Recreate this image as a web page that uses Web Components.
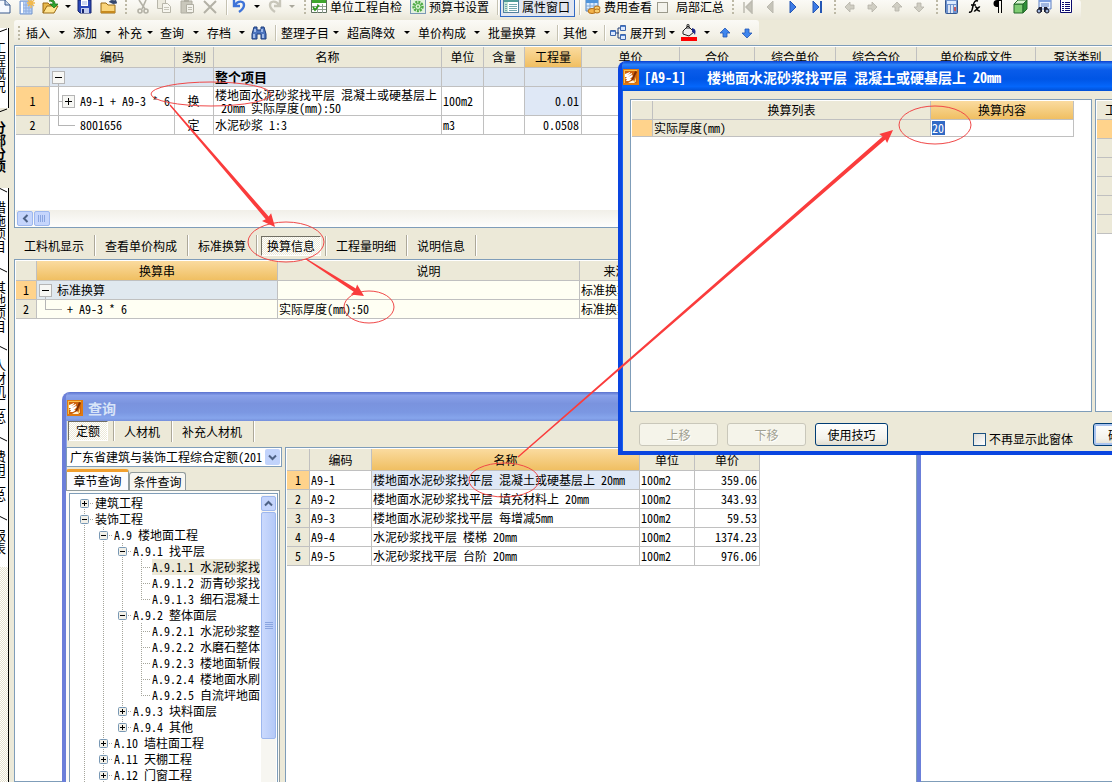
<!DOCTYPE html>
<html lang="zh-CN">
<head>
<meta charset="utf-8">
<title>分部分项</title>
<style>
html,body{margin:0;height:100%;overflow:hidden;background:#ece9d8}
body{font:12px/16px "Noto Sans CJK SC",sans-serif;font-feature-settings:"hwid";color:#000}
</style>
</head>
<body>
<budget-app></budget-app>
<script>
const BASE = `*{box-sizing:border-box}button,input,select{font:inherit;font-feature-settings:inherit;color:inherit;margin:0;padding:0;border:0;background:none;border-radius:0}svg{display:block;flex:none}`;
function define(name, render) {
  customElements.define(name, class extends HTMLElement {
    constructor() { super(); this.attachShadow({mode: 'open'}); }
    connectedCallback() {
      const t = document.createElement('template');
      t.innerHTML = render(this);
      this.shadowRoot.replaceChildren(t.content.cloneNode(true));
    }
  });
}
const svg = (w, h, body, extra = '') => `<svg width="${w}" height="${h}" viewBox="0 0 ${w} ${h}" ${extra}>${body}</svg>`;
const arrow = (c, s, r) => svg(12, 12, `<path transform="rotate(${r} 6 6)" d="M6 1l5 5H8v4H4V6H1z" fill="${c}" stroke="${s}" stroke-width=".8"/>`);
const ICONS = {
  doc: svg(12, 16, '<path d="M-3 1h8l5 5v8H-3z" fill="#f6f9ff" stroke="#39588c"/><path d="M5 1v5h5" fill="#c5d3ea" stroke="#39588c"/>'),
  sheet: svg(16, 16, '<path d="M1 2h12v13H1z" fill="#bcd3f7" stroke="#6f92cb"/><path d="M1 6h12M1 9h12M1 12h12M4 2v13M7 2v13M10 2v13" stroke="#8fadde"/><path d="M2 3h2v11H2z" fill="#fff"/><path d="M12 0v9M8 4h8M9 1l6 6M15 1L9 7" stroke="#f2b84b" stroke-width="1.3"/>'),
  open: svg(17, 16, '<path d="M1 14V4h5l2 2h5v3" fill="#e9b94b" stroke="#9a6b14"/><path d="M1 14l4-7h11l-4 7z" fill="#ffe491" stroke="#9a6b14"/><path d="M7 2c3-2 6-1 6 3h3l-4 4-4-4h3c0-2-1-3-4-3z" fill="#2fa52f" stroke="#146c14" stroke-width=".7"/>'),
  save: svg(15, 16, '<path d="M1 1h13v13H3l-2-2z" fill="#2b48b8" stroke="#16256e"/><path d="M4 1h7v6H4z" fill="#fff"/><path d="M5 3h5M5 5h5" stroke="#9db0e0"/><path d="M4 9h8v5H4z" fill="#c3cdef"/><path d="M5 10h2v4H5z" fill="#16256e"/>'),
  folderup: svg(17, 16, '<path d="M1 14V4h5l2 2h7v8z" fill="#fbd57b" stroke="#9a6b14"/><path d="M1 13h14" stroke="#c68a20" stroke-width="2"/><path d="M9 3c2-2 4-2 6-1V0l2 4-4 1" fill="#33476e" stroke="#33476e" stroke-width=".6"/>'),
  cut: svg(14, 16, '<path d="M3 1l6 9M10 1L6 10" stroke="#b3b1a6" stroke-width="1.6"/><circle cx="4" cy="12" r="2" fill="none" stroke="#b3b1a6" stroke-width="1.6"/><circle cx="10" cy="12" r="2" fill="none" stroke="#b3b1a6" stroke-width="1.6"/>'),
  copy: svg(16, 16, '<path d="M1.500.500h8v9h-8z" fill="#eceade" stroke="#b8b6aa"/><path d="M6.500 4.500h5l3 3v6h-8z" fill="#f7f6ef" stroke="#b8b6aa"/><path d="M8 8.500h5M8 10.500h5" stroke="#c9c7bb"/>'),
  paste: svg(15, 16, '<path d="M1 2h11v12H1z" fill="#c9c7bb" stroke="#b0aea2"/><path d="M6.500 5.500h7v8h-7z" fill="#f4f3ec" stroke="#b0aea2"/><path d="M8 8.500h4M8 10.500h4" stroke="#c0beb2"/><path d="M4 0h5v3H4z" fill="#b0aea2"/>'),
  del: svg(14, 16, '<path d="M1 2l12 12M13 2L1 14" stroke="#b3b1a6" stroke-width="2"/>'),
  undo: svg(14, 16, '<path d="M2 1v6h6M3 6c3-5 9-4 9 0 0 3-2 5-5 7" fill="none" stroke="#3f74d8" stroke-width="2.4"/>'),
  redo: svg(14, 16, '<path d="M12 1v6H6M11 6C8 1 2 2 2 6c0 3 2 5 5 7" fill="none" stroke="#c8c6ba" stroke-width="2.4"/>'),
  check: svg(16, 16, '<path d="M.5.500h15v13H.5z" fill="#fff" stroke="#5e6f5e"/><path d="M1 0h14v4H1z" fill="#3fa62e"/><path d="M1 7.500h14M1 10.500h14M6.500 5v9M11.500 5v9" stroke="#8f9f8f"/><path d="M2 8l2 3 4-5" fill="none" stroke="#2c9b1d" stroke-width="1.8"/>'),
  gear: svg(16, 16, '<rect x=".5" y=".5" width="15" height="14" fill="#e3f2df" stroke="#7b98b5"/><circle cx="8" cy="7.500" r="4.500" fill="none" stroke="#4eaa45" stroke-width="2.400" stroke-dasharray="2 1"/><circle cx="8" cy="7.500" r="3" fill="#d6f2d0" stroke="#4eaa45"/><circle cx="8" cy="7.500" r="1" fill="#4eaa45"/>'),
  props: svg(16, 16, '<rect x=".5" y=".5" width="15" height="13" fill="#fff" stroke="#53809e"/><path d="M1 1h14v2H1z" fill="#4f9b96"/><path d="M1 3h4v10H1z" fill="#c8e8d6"/><path d="M2 5.500h2M2 7.500h2M2 9.500h2M2 11.500h2M6 5.500h8M6 7.500h8M6 9.500h8M6 11.500h8" stroke="#75a8b0"/>'),
  cost: svg(16, 16, '<path d="M1 1h12v11H1z" fill="#d9ebff" stroke="#4f80bd"/><path d="M1 1h12v3H1z" fill="#4f94db"/><path d="M1 7h12M1 10h12M5 4v8M9 4v8" stroke="#7ca7d9"/><ellipse cx="7" cy="12" rx="4" ry="2.5" fill="#f4b34a" stroke="#b36d15"/><ellipse cx="12" cy="9" rx="3" ry="2" fill="#f9cf71" stroke="#b36d15"/><ellipse cx="12" cy="12" rx="3" ry="2" fill="#f9cf71" stroke="#b36d15"/>'),
  first: svg(12, 14, '<path d="M2 2v11M10 1v12L4 7z" fill="#c6c4b9" stroke="#bcbab0" stroke-width="1.5"/>'),
  prev: svg(12, 14, '<path d="M8 1v12L2 7z" fill="#c6c4b9" stroke="#bcbab0"/>'),
  next: svg(12, 14, '<path d="M2 1v12l6-6z" fill="#3d7be6" stroke="#2456b4"/>'),
  last: svg(12, 14, '<path d="M2 1v12l6-6z" fill="#3d7be6" stroke="#2456b4"/><path d="M10 1v12" stroke="#2456b4" stroke-width="2"/>'),
  gl: arrow('#d0cec3', '#b5b3a8', -90), gr: arrow('#d0cec3', '#b5b3a8', 90), gu: arrow('#d0cec3', '#b5b3a8', 0), gd: arrow('#d0cec3', '#b5b3a8', 180),
  up: arrow('#3f86ee', '#2456b4', 0), down: arrow('#3f86ee', '#2456b4', 180),
  calc: svg(13, 16, '<rect x=".5" y=".5" width="12" height="14" rx="1" fill="#6f93cf" stroke="#34568f"/><path d="M2 2h9v3H2z" fill="#dcebff"/><path d="M3 7h2M6 7h2M9 7h2M3 9h2M6 9h2M3 11h2M6 11h2M3 13h2M6 13h2" stroke="#fff" stroke-width="1.4"/><path d="M9 9h2M9 11h2" stroke="#e04a3a" stroke-width="1.4"/>'),
  fx: svg(14, 16, '<path d="M1 13c3 1 3-2 4-6s2-6 5-5M3 6h5M7 8c3-1 1 5 5 4M12 8c-2-1-4 5-6 4" fill="none" stroke="#000" stroke-width="1.5"/>'),
  para: svg(12, 16, '<path d="M10 1H5a3 3 0 0 0 0 7h1v6h1V2h2v12h1V2z"/>'),
  cube: svg(15, 16, '<path d="M1 5h9v9H1z" fill="#7fcc73" stroke="#25692a"/><path d="M1 5l4-4h9l-4 4z" fill="#d9f4d1" stroke="#25692a"/><path d="M10 5l4-4v9l-4 4z" fill="#2f8f37" stroke="#25692a"/>'),
  find: svg(16, 16, '<path d="M3 0h12v10H3z" fill="#e8f0ff" stroke="#5c7ec2"/><path d="M3 0h12v3H3z" fill="#7fa0e0"/><path d="M5 5h8M5 7h8" stroke="#5c7ec2"/><path d="M1 13l2-5h3v5zM8 13V8h3l2 5z" fill="#223"/><circle cx="3" cy="12" r="2" fill="#9fb6de" stroke="#112"/><circle cx="11" cy="12" r="2" fill="#9fb6de" stroke="#112"/>'),
  list: svg(14, 16, '<path d="M1.500.500h11v13h-11z" fill="#fff" stroke="#0a0a6e"/><path d="M3 3.500h2M6 3.500h5M3 5.500h2M6 5.500h5M3 7.500h2M6 7.500h5M3 9.500h2M6 9.500h5M3 11.500h2M6 11.500h5" stroke="#0a0a6e"/>'),
  bino: svg(16, 14, '<path d="M3 1h3v3h4V1h3l2 7v5h-5V8H6v5H1V8z" fill="#4c74bd" stroke="#1d3c7c"/><path d="M3 8v4M12 8v4M4 3v3M11 3v3" stroke="#cfe0ff" stroke-width="1.3"/>'),
  tree: svg(17, 16, '<path d="M5 8h4M8 3v10M8 3h3M8 13h3" fill="none" stroke="#223f74"/><path d="M.5 5.500h5v5h-5zM10.500.500h5v5h-5zM10.500 9.500h5v5h-5z" fill="#dce9ff" stroke="#3e66aa"/><path d="M1 6h4v1H1zM11 1h4v1h-4zM11 10h4v1h-4z" fill="#4d7fd0"/>'),
  paint: svg(16, 17, '<path d="M2 7l5-5 6 6-5 4-6-2z" fill="#eee" stroke="#222"/><path d="M6 5V1c0-1 2-1 2 0v4" fill="none" stroke="#222"/><path d="M11 4c4 1 4 3 3 7-1-2-2-3-3-3z" fill="#1d2b8a"/><path d="M0 13h16v4H0z" fill="#f00"/>'),
  app: svg(16, 16, '<path d="M0 0h16v16H0z" fill="#e07a10"/><path d="M1 1h13v13H1z" fill="#f9c04a"/><path d="M2 2h12v12H2z" fill="#d0640e"/><path d="M2 5l5-2v1L4 6l5-2v1L5 8l4-2 1 1-3 3h2l-3 2H3l1-2H2l2-2H2z" fill="#fff"/><path d="M5 14l5-3 2 3z" fill="#fff3d8"/><path d="M12 2l2 1-4 8-2 1z" fill="#7d2e04"/><path d="M13 8v5h-2z" fill="#ffd873"/>'),
  grip: svg(4, 14, '<path d="M1 0v2M1 4v2M1 8v2M1 12v2" stroke="#bdb9a6" stroke-width="2"/>'),
  sep: svg(2, 16, '<path d="M.5 0v16" stroke="#c5c2b2"/><path d="M1.500 0v16" stroke="#fff"/>'),
  caret: svg(6, 4, '<path d="M0 0h6L3 3z"/>'),
  caretoff: svg(6, 4, '<path d="M0 0h6L3 3z" fill="#aaa89c"/>')
};
const box = (x, y, plus) => `<rect x="${x}.5" y="${y}.5" width="12" height="12" fill="#f7f7f4" stroke="#b5b5b5"/><path d="M${x + 3} ${y + 6}.5h7${plus ? `M${x + 6}.5 ${y + 3}v7` : ''}" stroke="#000"/>`;

/* tool-item: icon, caret, or a labelled command in a bar */
define('tool-item', el => {
  const k = el.getAttribute('icon'), pas = /^(grip|sep)$/.test(k), label = el.textContent;
  const on = el.hasAttribute('active'), chk = k === 'box';
  const inner = `${chk ? '<input type="checkbox" id="c">' : k ? ICONS[k] : ''}${label ? '<slot></slot>' : ''}`;
  return `<style>${BASE}:host{display:flex;flex:none;align-items:center;width:${el.getAttribute('w')}px;white-space:nowrap}
  .b{display:flex;align-items:center;gap:3px;height:20px;line-height:16px}
  .on{border:1px solid #316ac5;background:#e1e6f0;padding:0 2px;width:75px}
  label.b{gap:8px}input{appearance:none;width:11px;height:11px;border:1px solid #9c9a8c;background:#f4f3ec}</style>
  ${pas ? inner : chk ? `<label class="b">${inner}</label>` : `<button class="b ${on ? 'on' : ''}" aria-label="${label || k}">${inner}</button>`}`;
});
define('tool-bar', () => `<style>${BASE}:host{display:flex;align-items:center;width:max-content;border-radius:3px;background:linear-gradient(#fbfaf6,#f3f1e7 60%,#e9e6d7)}</style><slot></slot>`);
const items = list => list.map(([icon, w, t = '', a = '']) => `<tool-item ${icon ? `icon="${icon}"` : ''} w="${w}" ${a}>${t}</tool-item>`).join('');

const BAR1 = items([['doc',19],['sheet',23],['open',23],['caret',12],['save',23],['folderup',25],['grip',11],['cut',20],['copy',24],['paste',23],['del',23],['sep',6],['undo',22],['caret',14],['redo',21],['caretoff',15],['grip',7],
  ['check',99,'单位工程自检'],['gear',87,'预算书设置'],['sep',3],['props',79,'属性窗口','active'],['sep',6],['cost',72,'费用查看'],['box',75,'局部汇总'],['grip',10],['first',23],['prev',23],['next',23],['last',23],['grip',10],['gl',22],['gr',25],['gu',22],['gd',23],['grip',9],['calc',23],['fx',24],['para',21],['cube',23],['find',23],['list',22]]);
const BAR2 = items([['grip',8],['',33,'插入'],['caret',14],['',32,'添加'],['caret',13],['',29,'补充'],['caret',13],['',33,'查询'],['caret',14],['',32,'存档'],['caret',12],['bino',24],['sep',6],['',52,'整理子目'],['caret',14],['',57,'超高降效'],['caret',14],['',56,'单价构成'],['caret',14],['',56,'批量换算'],['caret',13],['sep',6],['',29,'其他'],['caret',12],['sep',6],['tree',59,'展开到'],['caret',12],['paint',23],['caret',15],['up',22],['down',18]]);

/* data-grid: column widths, header labels and rows come from a named model */
const c = (t, k = '') => ({t, k});
const row5 = (n, a, b, p) => ({h: 19, d: [c(n, 'n' + (n === '1' ? ' cur' : '')), c(a), c(b, n === '1' ? 'sel' : ''), c('100m2'), c(p, 'r')]});
const MODELS = {
  main: {w: [34,125,39,228,42,41,57,98,75,81,81,119,84], hh: 21, hot: 6, head: ['','编码','类别','名称','单位','含量','工程量','单价','合价','综合单价','综合合价','单价构成文件','泵送类别'], rows: [
    {h: 19, k: 'grp', d: [c('', 'n'), c(svg(30, 18, box(2, 3, 0) + '<path d="M8.500 16v3" stroke="#b5b5b5"/>', 'overflow="visible"'), 't'), c(''), c('<b>整个项目</b>'), ...Array(9).fill(c(''))]},
    {h: 29, d: [c('1', 'n cur'), c(svg(30, 28, '<path d="M8.500-1v30M8 14.500h5" stroke="#b5b5b5"/>' + box(12, 8, 1), 'overflow="visible"') + 'A9-1 + A9-3 * 6', 't'), c('换', 'm'), c('楼地面水泥砂浆找平层 混凝土或硬基层上<br>&nbsp;20mm 实际厚度(mm):50', 'two'), c('100m2'), c(''), c('0.01', 'r sel'), ...Array(6).fill(c(''))]},
    {h: 19, d: [c('2', 'n'), c(svg(30, 18, '<path d="M8.500-1v11M8 9.500h17" fill="none" stroke="#b5b5b5"/>', 'overflow="visible"') + '8001656', 't'), c('定', 'm'), c('水泥砂浆 1:3'), c('m3'), c(''), c('0.0508', 'r'), ...Array(6).fill(c(''))]}]},
  conv: {w: [21,241,302,72], hh: 20, hot: 1, head: ['','换算串','说明','来源'], rows: [
    {h: 19, k: 'cream', d: [c('1', 'n cur'), c(svg(20, 18, box(2, 3, 0) + '<path d="M8.500 16v3" stroke="#b5b5b5"/>', 'overflow="visible"') + '标准换算', 't blue'), c(''), c('标准换算')]},
    {h: 19, k: 'cream', d: [c('2', 'n'), c(svg(30, 18, '<path d="M8.500-1v11M8 9.500h17" stroke="#b5b5b5"/>', 'overflow="visible"') + '+ A9-3 * 6', 't'), c('实际厚度(mm):50'), c('标准换算')]}]},
  quota: {w: [23,62,268,55,65], hh: 22, hot: 2, head: ['','编码','名称','单位','单价'], rows: [
    row5('1','A9-1','楼地面水泥砂浆找平层 混凝土或硬基层上 20mm','359.06'), row5('2','A9-2','楼地面水泥砂浆找平层 填充材料上 20mm','343.93'), row5('3','A9-3','楼地面水泥砂浆找平层 每增减5mm','59.53'), row5('4','A9-4','水泥砂浆找平层 楼梯 20mm','1374.23'), row5('5','A9-5','水泥砂浆找平层 台阶 20mm','976.06')]},
  factor: {w: [21,278,143], hh: 19, hot: 2, head: ['','换算列表','换算内容'], rows: [{h: 17, d: [c('', 'cur'), c('实际厚度(mm)', 'dim'), c('<input value="20" aria-label="换算内容">')]}]},
  work: {w: [80], hh: 19, hot: -1, head: ['工'], rows: [{h: 19, d: [c('', 'cur')]}, ...Array(5).fill({h: 19, d: [c('', 'dim')]})]}
};
define('data-grid', el => {
  const m = MODELS[el.getAttribute('model')];
  return `<style>${BASE}:host{display:block;overflow:hidden}
  table{table-layout:fixed;border-collapse:separate;border-spacing:0;width:${m.w.reduce((a, b) => a + b)}px;background:#fff}
  th,td{border:solid #c0c0c0;border-width:0 1px 1px 0;padding:0 2px 0 1px;font-weight:400;line-height:16px;text-align:left;white-space:nowrap;overflow:hidden}
  th{background:#ece9d8;text-align:center;padding:0}
  th.hot{background:linear-gradient(#fadb9f,#f0bf62)}
  td.n{background:#ece9d8;text-align:center;padding:0}td.cur,td.n.cur{background:#ffd38c}
  .grp td{background:#dde6f1}.grp td.n{background:#ece9d8}.cream td:not(.n){background:#fffff3}
  td.sel{background:#dfe8f6}.cream td.blue{background:#e0e8ef}td.dim{background:#ece9d8}
  .r{text-align:right}.m{text-align:center}td.two{line-height:13px}
  td.t{padding:0}.t div{display:flex;align-items:center}b{font-weight:700;font-size:13px}
  th.left{text-align:left;padding-left:8px}
  input{display:block;width:13px;height:14px;line-height:14px;background:#316ac5;color:#fff}</style>
  <table><colgroup>${m.w.map(w => `<col style="width:${w}px">`).join('')}</colgroup>
  <thead><tr style="height:${m.hh}px">${m.head.map((h, i) => `<th class="${i === m.hot ? 'hot' : m.head.length === 1 ? 'left' : ''}">${h}</th>`).join('')}</tr></thead>
  <tbody>${m.rows.map(r => `<tr class="${r.k || ''}" style="height:${r.h}px">${r.d.map(d => `<td class="${d.k}">${/\bt\b/.test(d.k) ? `<div>${d.t}</div>` : d.t}</td>`).join('')}</tr>`).join('')}</tbody></table>`;
});

define('side-tabs', () => {
  const tabs = [['工程概况',80],['分部分项',80],['措施项目',80],['其他项目',78],['人材机汇总',91],['费用汇总',79],['报表',51]];
  return `<style>${BASE}:host{display:flex;flex-direction:column;width:14px;padding-top:8px;background:#ece9d8}
  button{display:flex;flex-direction:column;width:9px;overflow:hidden;background:#fff;border-right:1px solid #000;align-items:flex-end;flex:none}
  span{writing-mode:vertical-rl;text-orientation:upright;line-height:12px;font-size:13px;width:12px;margin:8px 3px 0 0}
  .on{background:#ece9d8;border-right-color:#ece9d8;font-weight:700}
  .rest{flex:1;width:9px;border-right:1px solid #000;background:repeating-conic-gradient(#fff 0 25%,#e4e0cc 0 50%) 0 0/2px 2px}</style>
  ${tabs.map(([t, h], i) => `<button class="${i === 1 ? 'on' : ''}" style="height:${h}px">${svg(9, 5, `<path d="${i < 2 ? 'M0 4l8-3' : 'M0 0l8 4'}" stroke="#000"/>`)}<span>${t}</span></button>`).join('')}<div class="rest"></div>`;
});

define('tab-strip', el => {
  const on = +el.getAttribute('active');
  return `<style>${BASE}:host{display:flex;align-items:center}
  button{height:21px;padding:0 10px;border-right:1px solid #aca899;box-shadow:1px 0 #fff;white-space:nowrap}
  :host(:not([wide])) button:first-child{padding-left:8px}:host([wide])>button,button+button{padding-left:10px}
  .w{display:flex;padding:0 4px;border-right:1px solid #aca899;box-shadow:1px 0 #fff}
  .w button{height:20px;border:1px solid;border-color:#716f64 #fff #fff #716f64;box-shadow:none;background:repeating-conic-gradient(#fff 0 25%,#ece9d8 0 50%) 0 0/2px 2px}
  :host(:not([wide])) .w button{padding:0 5px}
  :host([wide]) .w{padding:0 5px 0 2px}:host([wide]) .w button{padding:0 7px}:host([wide]) .w~button{padding:0 11px 0 10px}</style>
  ${el.getAttribute('tabs').split(',').map((t, i) => i === on ? `<div class="w"><button>${t}</button></div>` : `<button>${t}</button>`).join('')}`;
});

define('tree-view', () => {
  const rows = [[0,'+','建筑工程'],[0,'-','装饰工程'],[1,'-','A.9 楼地面工程'],[2,'-','A.9.1 找平层'],[3,'','A.9.1.1 水泥砂浆找平层',1],[3,'','A.9.1.2 沥青砂浆找平层'],[3,'','A.9.1.3 细石混凝土'],[2,'-','A.9.2 整体面层'],[3,'','A.9.2.1 水泥砂浆整体面层'],[3,'','A.9.2.2 水磨石整体面层'],[3,'','A.9.2.3 楼地面斩假石'],[3,'','A.9.2.4 楼地面水刷石'],[3,'','A.9.2.5 自流坪地面'],[2,'+','A.9.3 块料面层'],[2,'+','A.9.4 其他'],[1,'+','A.10 墙柱面工程'],[1,'+','A.11 天棚工程'],[1,'+','A.12 门窗工程'],[1,'+','A.13 幕墙工程']];
  const dot = d => `<path d="${d}" stroke="#a5a59b" stroke-dasharray="1 1"/>`;
  const gutter = ([lv, s], i) => {
    let g = '', x = 9 + lv * 19;
    for (let l = 0; l < lv; l++) if (!(l === 2 && i > 14)) g += dot(`M${9 + l * 19}.5 0v16`);
    if (s) g += dot(`M${x + 4} 8.500h5`) + (i ? dot(`M${x}.5 0v4`) : '') + (lv !== 2 || i !== 14 ? dot(`M${x}.5 12v4`) : '') +
      `<rect x="${x - 4}.5" y="4.500" width="8" height="8" rx="1" fill="#f2f0e8" stroke="#7898b5"/><path d="M${x - 2} 8.500h5${s === '+' ? `M${x}.5 6v5` : ''}" stroke="#000"/>`;
    else g += dot(`M${x}.5 0v${i === 6 || i === 12 ? 8 : 16}`) + dot(`M${x} 8.500h9`);
    return svg(20 + lv * 19, 16, g);
  };
  return `<style>${BASE}:host{display:flex;overflow:hidden;background:#fff;border:1px solid #7f9db9;padding:1px 1px 0 5px}
  ul{list-style:none;margin:0 1px 0 0;padding:0;flex:1;min-width:0;overflow:hidden}
  li{display:flex;height:16px;line-height:16px;white-space:nowrap}.s span{background:#ece9d8;flex:1}
  .bar{width:15px;flex:none;background:#f7f6f1;display:flex;flex-direction:column;gap:1px;padding-top:1px}
  .bar button{height:15px;border:1px solid #9db7ee;border-radius:2px;background:#c5d5fc;display:grid;place-items:center}
  .bar .th{height:227px;background:linear-gradient(90deg,#cbdafd,#b4c9f8)}</style>
  <ul role="tree">${rows.map((r, i) => `<li role="treeitem" class="${r[3] ? 's' : ''}">${gutter(r, i)}<span>${r[2]}</span></li>`).join('')}</ul>
  <div class="bar"><button aria-label="向上">${svg(9, 7, '<path d="M1 5.500l3.500-3.500L8 5.500" fill="none" stroke="#4d6185" stroke-width="2"/>')}</button><button class="th" aria-label="滚动">${svg(8, 8, '<path d="M0 .5h8M0 2.500h8M0 4.500h8M0 6.500h8" stroke="#8aa5e0"/>')}</button></div>`;
});

/* xp-window: framed window with a title bar; "idle" gives the unfocused palette */
define('xp-window', el => {
  const idle = el.hasAttribute('idle');
  return `<style>${BASE}:host{display:flex;flex-direction:column;border-radius:8px 8px 0 0;overflow:hidden;border:solid ${idle ? '#6b7fd9' : '#0a45e0'};border-width:0 4px 4px;background:#ece9d8;box-shadow:inset 1px 0 ${idle ? '#8ea5e5' : '#1660f0'}}
  header{display:flex;align-items:center;gap:5px;margin:0 -4px;padding:2px 5px 0;height:${idle ? 29 : 30}px;flex:none;white-space:pre;
  background:${idle ? 'linear-gradient(#5a72cf,#8aa2ea 12%,#7a93de 40%,#7b97e2 70%,#86a5ec 90%,#7690dc)' : 'linear-gradient(#0a3fcf,#2b83fb 12%,#0a5cea 30%,#0055e5 60%,#0466fb 85%,#0150d6)'};
  color:${idle ? '#d8e4f8' : '#fff'};font:700 14px/20px "Noto Sans CJK SC",sans-serif;font-feature-settings:"hwid"}</style>
  <header>${ICONS.app}<slot name="title"></slot></header><slot></slot>`;
});
define('xp-button', el => `<style>${BASE}:host{display:block;flex:none}button{width:${el.getAttribute('w')}px;height:23px;border:1px solid #003c74;border-radius:3px;background:linear-gradient(#fff,#f3f2ec 70%,#dfdccf);white-space:nowrap}
  button:disabled{border-color:#c9c7ba;background:#f5f4ea;color:#a1a192;text-shadow:1px 1px #fff}:host([default]) button{box-shadow:inset 0 0 0 2px #aac4f0}</style>
  <button ${el.hasAttribute('disabled') ? 'disabled' : ''}><slot></slot></button>`);

define('query-window', () => `<style>${BASE}:host{display:flex}
  xp-window{flex:1;min-width:0}
  .tabs{height:26px;align-items:flex-start}
  .main{display:flex;flex:1;min-height:0;gap:3px}
  .left{width:216px;display:flex;flex-direction:column;flex:none}
  .combo{display:flex;border:1px solid #7f9db9;background:#fff;height:20px;position:relative}
  select{appearance:none;width:195px;padding-left:3px;overflow:hidden;white-space:nowrap;text-overflow:clip}
  .dd{position:absolute;right:1px;top:1px;width:15px;height:16px;border-radius:2px;background:#c1d3fb;display:grid;place-items:center;pointer-events:none}
  .pages{display:flex;align-items:flex-end;height:22px;margin-top:1px}
  .pages button{border:1px solid #919b9c;border-bottom:0;border-radius:3px 3px 0 0;background:#f8f7f2;height:18px;width:57px;line-height:16px;text-align:center;white-space:nowrap}
  .pages .on{width:63px;height:21px;border-top:3px solid #f2a02e;background:#fcfcfe}
  .page{flex:1;min-height:0;display:flex;border:solid #919b9c;border-width:1px 1px 0 0;background:#fbfbf8;padding:2px 1px 0 3px;margin-right:2px}
  tree-view{flex:1}
  .right{flex:1;min-width:0;background:#fff;border:1px solid #7f9db9;border-bottom:0;padding:1px 0 0 1px}</style>
  <xp-window idle><span slot="title">查询</span>
  <tab-strip class="tabs" wide active="0" tabs="定额,人材机,补充人材机"></tab-strip>
  <div class="main"><div class="left"><div class="combo"><select aria-label="定额库"><option>广东省建筑与装饰工程综合定额(201</option></select><span class="dd">${svg(9, 7, '<path d="M1 1.500l3.500 3.500L8 1.500" fill="none" stroke="#4d6185" stroke-width="2"/>')}</span></div>
  <div class="pages"><button class="on">章节查询</button><button>条件查询</button></div><div class="page"><tree-view></tree-view></div></div>
  <div class="right"><data-grid model="quota"></data-grid></div></div></xp-window>`);

define('factor-dialog', () => `<style>${BASE}:host{display:flex}
  xp-window{flex:1;min-width:0}
  .lists{display:flex;gap:3px;padding:8px 8px 0;height:322px}
  .l{width:462px;flex:none;border:1px solid #7f9db9;background:#fff;padding:1px}.r{flex:1;min-width:0;border:1px solid #7f9db9;background:#fff;padding:1px}
  footer{display:flex;gap:9px;padding:11px 17px 0;height:39px}
  .chk{display:flex;align-items:center;gap:3px;margin:8px 11px 0 76px;height:16px;white-space:nowrap}
  input{appearance:none;width:13px;height:13px;border:1px solid #1c5180;background:linear-gradient(135deg,#dcdcd7,#fff)}</style>
  <xp-window><span slot="title">[A9-1]   楼地面水泥砂浆找平层 混凝土或硬基层上 20mm</span>
  <div class="lists"><div class="l"><data-grid model="factor"></data-grid></div><div class="r"><data-grid model="work"></data-grid></div></div>
  <footer><xp-button w="79" disabled>上移</xp-button><xp-button w="79" disabled>下移</xp-button><xp-button w="73">使用技巧</xp-button><label class="chk"><input type="checkbox">不再显示此窗体</label><xp-button w="54" default>确定</xp-button></footer></xp-window>`);

/* red-marks: ellipses and tapered arrows laid over the whole workspace */
define('red-marks', () => {
  const a = (x1, y1, x2, y2, w, L) => {
    const d = Math.hypot(x2 - x1, y2 - y1), u = (x2 - x1) / d, v = (y2 - y1) / d, p = (t, s) => `${(x1 + u * t - v * s).toFixed(1)},${(y1 + v * t + u * s).toFixed(1)}`;
    return `<polygon points="${p(0, -.6)} ${p(d - L, -w / 2)} ${p(d - L - 1, -w - 2)} ${p(d, 0)} ${p(d - L - 1, w + 2)} ${p(d - L, w / 2)} ${p(0, .6)}"/>`;
  };
  const e = (x, y, rx, ry) => `<ellipse cx="${x}" cy="${y}" rx="${rx}" ry="${ry}"/>`;
  return `<style>:host{display:block;pointer-events:none}svg{display:block}</style>${svg(1112, 782, `<g fill="none" stroke="#f04848">${e(211, 94, 60, 12)}${e(286, 242, 38, 20)}${e(369, 307, 25, 16)}${e(935, 125, 36, 19)}${e(504, 480, 35, 17)}</g><g fill="#fa3c3c">${a(170, 105, 275, 227, 4, 12)}${a(306, 259, 364, 296, 4, 11)}${a(518, 457, 893, 130, 4, 12)}</g>`)}`;
});

define('budget-app', () => `<style>${BASE}:host{display:flex;flex-direction:column;height:100vh;position:relative;overflow:hidden}
  .b1{height:20px;flex:none;align-items:center;padding-bottom:6px}
  .body{display:flex;flex:1;min-height:0}
  side-tabs{flex:none}
  .work{flex:1;min-width:0;display:flex;flex-direction:column}
  .b2{height:25px;padding-left:4px;flex:none}
  .pane{border:1px solid #7f9db9;border-right:0;background:#fff;padding:1px 0 0 1px}
  .top{height:183px;flex:none;display:flex;flex-direction:column;justify-content:space-between}
  .sb{height:17px;display:flex;gap:1px;background:linear-gradient(#f1efe8,#fefefd);padding:1px}
  .sb button{width:16px;height:15px;border:1px solid #9db7ee;border-radius:2px;background:#c5d5fc;display:grid;place-items:center}
  tab-strip{height:31px;flex:none;padding-top:4px}
  .bot{flex:1;min-height:0}
  query-window,factor-dialog,red-marks{position:absolute}
  query-window{left:62px;top:392px;width:859px;bottom:-6px}
  factor-dialog{left:618px;top:61px;right:-56px;height:394px}
  red-marks{left:0;top:0}</style>
  <tool-bar class="b1">${BAR1}</tool-bar>
  <div class="body"><side-tabs></side-tabs><div class="work"><tool-bar class="b2">${BAR2}</tool-bar>
  <section class="pane top"><data-grid model="main"></data-grid><div class="sb"><button aria-label="向左">${svg(7, 9, '<path d="M5.500 1L2 4.500 5.500 8" fill="none" stroke="#4d6185" stroke-width="2"/>')}</button><button aria-label="滚动">${svg(8, 7, '<path d="M.5 0v7M2.500 0v7M4.500 0v7M6.500 0v7" stroke="#8aa5e0"/>')}</button></div></section>
  <tab-strip active="3" tabs="工料机显示,查看单价构成,标准换算,换算信息,工程量明细,说明信息"></tab-strip>
  <section class="pane bot"><data-grid model="conv"></data-grid></section></div></div>
  <query-window></query-window><factor-dialog></factor-dialog><red-marks></red-marks>`);
</script>
</body>
</html>
